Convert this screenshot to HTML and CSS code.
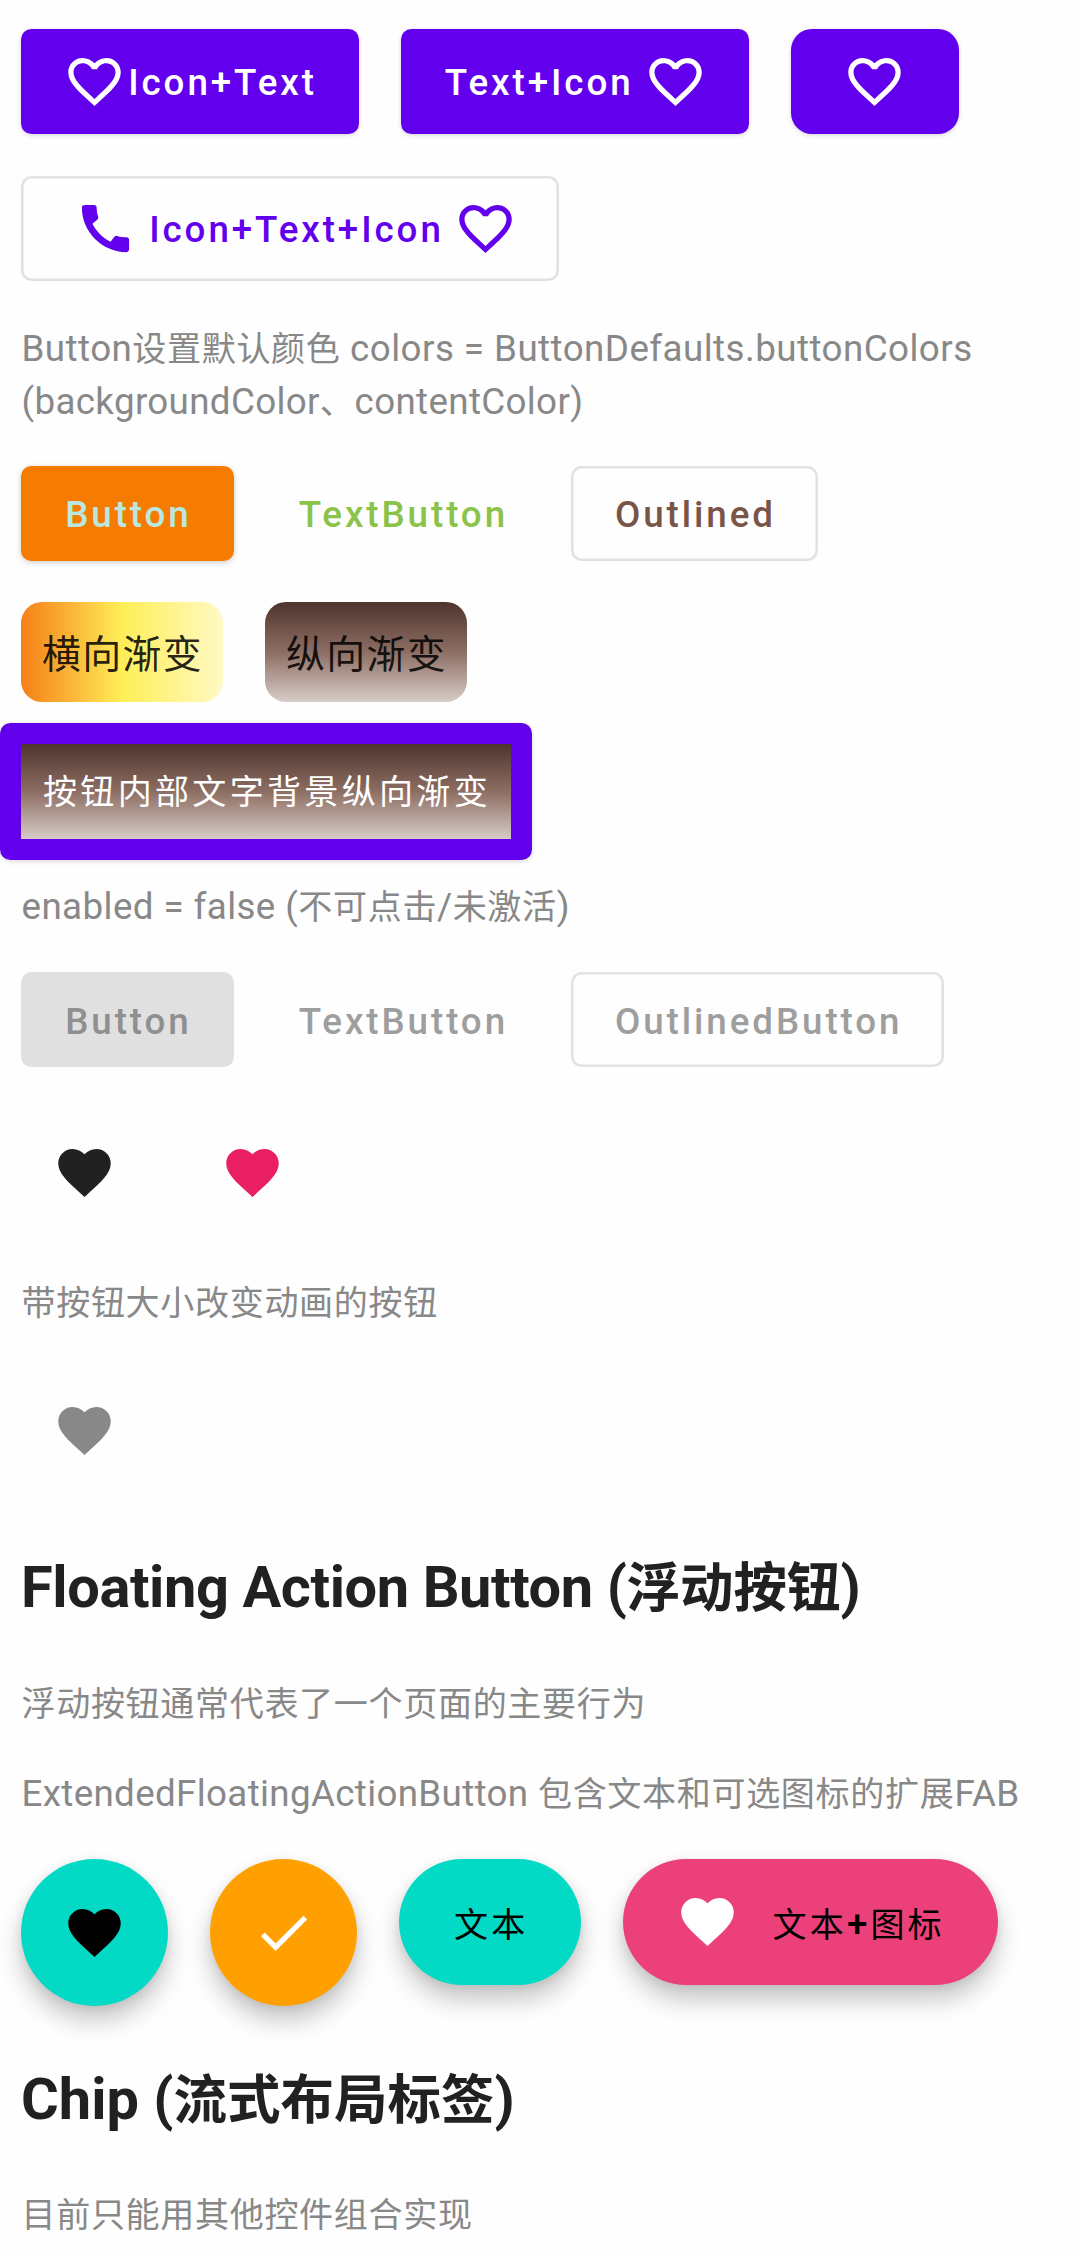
FILE: index.html
```html
<!DOCTYPE html>
<html lang="zh-CN">
<head>
<meta charset="utf-8">
<title>Button</title>
<link rel="stylesheet" href="styles.css">
</head>
<body>
<svg class="defs" aria-hidden="true">
  <symbol id="heart-outline" viewBox="0 0 24 24"><path d="M16.5 3c-1.74 0-3.41.81-4.5 2.09C10.91 3.81 9.24 3 7.5 3 4.42 3 2 5.42 2 8.5c0 3.78 3.4 6.86 8.55 11.54L12 21.35l1.45-1.32C18.6 15.36 22 12.28 22 8.5 22 5.42 19.58 3 16.5 3zm-4.4 15.55l-.1.1-.1-.1C7.14 14.24 4 11.39 4 8.5 4 6.5 5.5 5 7.5 5c1.54 0 3.04.99 3.57 2.36h1.87C13.46 5.99 14.96 5 16.5 5c2 0 3.5 1.5 3.5 3.5 0 2.89-3.14 5.74-7.9 10.05z"/></symbol>
  <symbol id="heart" viewBox="0 0 24 24"><path d="M12 21.35l-1.45-1.32C5.4 15.36 2 12.28 2 8.5 2 5.42 4.42 3 7.5 3c1.74 0 3.41.81 4.5 2.09C13.09 3.81 14.76 3 16.5 3 19.58 3 22 5.42 22 8.5c0 3.78-3.4 6.86-8.55 11.54L12 21.35z"/></symbol>
  <symbol id="phone" viewBox="0 0 24 24"><path d="M20.01 15.38c-1.23 0-2.42-.2-3.53-.56-.35-.12-.74-.03-1.01.24l-1.57 1.97c-2.83-1.35-5.48-3.9-6.89-6.83l1.95-1.66c.27-.28.35-.67.24-1.02-.37-1.11-.56-2.3-.56-3.53 0-.54-.45-.99-.99-.99H4.19C3.65 3 3 3.24 3 3.99 3 13.28 10.73 21 20.01 21c.71 0 .99-.63.99-1.18v-3.45c0-.54-.45-.99-.99-.99z"/></symbol>
  <symbol id="check" viewBox="0 0 24 24"><path d="M9 16.17L4.83 12l-1.42 1.41L9 19 21 7l-1.41-1.41z"/></symbol>
</svg>
<main class="page">
  <div class="row icon-row">
    <button class="btn filled tall"><svg class="icon"><use href="#heart-outline"/></svg><span class="text-label">Icon+Text</span></button>
    <button class="btn filled tall spaced"><span class="text-label">Text+Icon</span><svg class="icon"><use href="#heart-outline"/></svg></button>
    <button class="btn filled tall rounded"><svg class="icon"><use href="#heart-outline"/></svg></button>
  </div>
  <div class="row mixed-row">
    <button class="btn outlined tall spaced primary"><svg class="icon lead"><use href="#phone"/></svg><span class="text-label">Icon+Text+Icon</span><svg class="icon"><use href="#heart-outline"/></svg></button>
  </div>
  <p class="note colors-note">Button<span class="zh">设置默认颜色</span> colors = ButtonDefaults.buttonColors<br><span class="tight">(backgroundColor<span class="zh">、</span>contentColor)</span></p>
  <div class="row button-row">
    <button class="btn orange"><span class="text-label">Button</span></button>
    <button class="btn text green"><span class="text-label">TextButton</span></button>
    <button class="btn outlined brown"><span class="text-label">Outlined</span></button>
  </div>
  <div class="row gradient-row">
    <div class="gradient horizontal"><span class="zh">横向渐变</span></div>
    <div class="gradient vertical"><span class="zh">纵向渐变</span></div>
  </div>
  <button class="btn filled wrapper"><span class="inner vertical"><span class="zh">按钮内部文字背景纵向渐变</span></span></button>
  <p class="note enabled-note">enabled = false (<span class="zh">不可点击</span>/<span class="zh">未激活</span>)</p>
  <div class="row button-row disabled-row">
    <button class="btn disabled" disabled><span class="text-label">Button</span></button>
    <button class="btn text faded" disabled><span class="text-label">TextButton</span></button>
    <button class="btn outlined faded" disabled><span class="text-label">OutlinedButton</span></button>
  </div>
  <div class="row toggles">
    <button class="icon-btn dark"><svg class="icon"><use href="#heart"/></svg></button>
    <button class="icon-btn pink"><svg class="icon"><use href="#heart"/></svg></button>
  </div>
  <p class="note size-note"><span class="zh">带按钮大小改变动画的按钮</span></p>
  <div class="row size-row">
    <button class="icon-btn gray"><svg class="icon"><use href="#heart"/></svg></button>
  </div>
  <h2 class="title fab-title">Floating Action Button (<span class="zh">浮动按钮</span>)</h2>
  <p class="note fab-note"><span class="zh">浮动按钮通常代表了一个页面的主要行为</span></p>
  <p class="note extended-note tight">ExtendedFloatingActionButton <span class="zh">包含文本和可选图标的扩展</span>FAB</p>
  <div class="row fabs">
    <button class="fab round teal"><svg class="icon"><use href="#heart"/></svg></button>
    <button class="fab round amber"><svg class="icon"><use href="#check"/></svg></button>
    <button class="fab extended teal"><span class="fab-label"><span class="zh">文本</span></span></button>
    <button class="fab extended rose"><svg class="icon"><use href="#heart"/></svg><span class="fab-label"><span class="zh">文本</span>+<span class="zh">图标</span></span></button>
  </div>
  <h2 class="title chip-title">Chip (<span class="zh">流式布局标签</span>)</h2>
  <p class="note chip-note"><span class="zh">目前只能用其他控件组合实现</span></p>
</main>
</body>
</html>
```
FILE: styles.css
```css
* { box-sizing: border-box; }

body {
  margin: 0;
  background: #fefefe;
  color: #212121;
  font-family: Roboto, "Noto Sans CJK SC", sans-serif;
  font-size: 36.75px;
}

.defs { display: none; }

.page {
  width: 1080px;
  height: 2253px;
  overflow: hidden;
  display: flex;
  flex-direction: column;
  align-items: flex-start;
}

.row {
  display: flex;
  align-items: flex-start;
  gap: 42px;
  padding-left: 21px;
}

.icon {
  display: block;
  flex: none;
  width: 63px;
  height: 63px;
  fill: currentColor;
}

.zh {
  font-size: 0.9266em;
  font-weight: 400;
  line-height: 0;
}

.btn {
  display: flex;
  align-items: center;
  justify-content: center;
  height: 95px;
  margin: 0;
  padding: 0 42px;
  border: 0;
  border-radius: 10.5px;
  background: none;
  color: inherit;
  font: 500 36.75px/43px Roboto, "Noto Sans CJK SC", sans-serif;
  letter-spacing: 2.92px;
  white-space: nowrap;
}
.btn .zh { letter-spacing: 3.28px; }

.text-label {
  margin-right: -0.2px;
  padding: 3.5px 0 0 2.2px;
}

.btn.tall { height: 105px; }
.btn.spaced { gap: 10.5px; }
.btn.rounded { width: 168px; border-radius: 21px; }
.lead { margin-left: 10.5px; }

.filled {
  background: #6200ee;
  color: #fff;
  box-shadow: 0 2px 5px rgba(0, 0, 0, 0.1), 0 0 4px rgba(0, 0, 0, 0.06);
}

.orange {
  background: #f57c00;
  color: #bae8e0;
  box-shadow: 0 2px 6px rgba(0, 0, 0, 0.16), 0 0 4px rgba(0, 0, 0, 0.06);
}

.outlined { box-shadow: inset 0 0 0 2.6px #e2e2e2; }
.primary { color: #6200ee; }
.btn.text { padding-left: 21px; padding-right: 21px; }
.green { color: #8bc34a; }
.brown { color: #795548; }
.disabled { background: #e0e0e0; color: #8f8f8f; }
.faded { color: #9e9e9e; }

.note {
  margin: 0;
  padding-left: 21.5px;
  color: #888;
  line-height: 52.5px;
  letter-spacing: 0.45px;
  white-space: nowrap;
}
.tight { letter-spacing: 0.34px; }
.note .zh { letter-spacing: 0.656px; }

.title {
  margin: 0;
  padding-left: 21px;
  font-size: 57.75px;
  font-weight: 700;
  line-height: 70px;
  white-space: nowrap;
}
.title .zh { font-weight: 700; letter-spacing: 0; }

.icon-row { margin-top: 28.5px; }
.mixed-row { margin-top: 42px; }
.colors-note { margin-top: 42.5px; }
.button-row { margin-top: 37.7px; }
.gradient-row { margin-top: 41.6px; }
.enabled-note { margin-top: 21.2px; letter-spacing: 0.41px; }
.disabled-row { margin-top: 38.3px; }
.toggles { margin-top: 42.3px; }
.size-note { margin-top: 42.2px; }
.size-row { margin-top: 38.2px; }
.fab-title { margin-top: 58.4px; letter-spacing: -0.4px; }
.fab-note { margin-top: 55.2px; }
.extended-note { margin-top: 38px; }
.fabs { margin-top: 38.3px; }
.chip-title { margin-top: 58px; }
.chip-note { margin-top: 55.2px; }
.extended-note { letter-spacing: 0.34px; }

.gradient {
  display: flex;
  align-items: center;
  justify-content: center;
  width: 202px;
  height: 99.5px;
  padding: 5px 0 0 1px;
  border-radius: 21px;
  color: rgba(0, 0, 0, 0.87);
  font-size: 42px;
  letter-spacing: 1.3px;
  white-space: nowrap;
}
.horizontal { background: linear-gradient(90deg, #f57f17, #ffee58 50%, #fff9c4); }
.vertical { background: linear-gradient(180deg, #4e342e, #8d6e63 50%, #d7ccc8); }

.btn.wrapper {
  width: 532px;
  height: 137px;
  margin-top: 21px;
  padding: 0;
}
.inner {
  display: flex;
  align-items: center;
  justify-content: center;
  width: 490px;
  height: 95px;
  padding: 1px 0 0 2px;
}

.icon-btn {
  display: flex;
  align-items: center;
  justify-content: center;
  width: 126px;
  height: 126px;
  padding: 0;
  border: 0;
  background: none;
}
.dark { color: #212121; }
.pink { color: #e91e63; }
.gray { color: #888; }

.fab {
  display: flex;
  align-items: center;
  justify-content: center;
  padding: 0;
  border: 0;
  color: #000;
  font: 500 36.75px/43px Roboto, "Noto Sans CJK SC", sans-serif;
  letter-spacing: 3.1px;
  white-space: nowrap;
  box-shadow: 0 15px 24px rgba(0, 0, 0, 0.22), 0 2px 10px rgba(0, 0, 0, 0.08);
}
.round { width: 147px; height: 147px; border-radius: 50%; }
.extended {
  justify-content: flex-start;
  width: 182px;
  height: 126px;
  padding: 0 0 0 52.5px;
  border-radius: 63px;
  gap: 31.5px;
}
.extended.rose { width: 375px; }
.fab-label { padding: 5px 0 0 2.6px; }
.teal { background: #03dac5; }
.amber { background: #ffa000; }
.rose { background: #ec407a; }
.amber .icon, .rose .icon { color: #fff; }
```
